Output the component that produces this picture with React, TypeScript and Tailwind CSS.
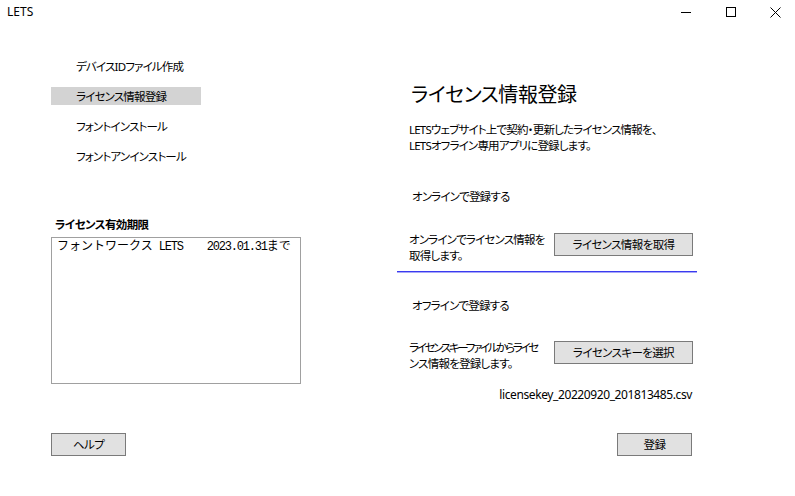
import React from "react";

const navItems = ["デバイスIDファイル作成", "ライセンス情報登録", "フォントインストール", "フォントアンインストール"];

function Btn({ label, className = "" }: { label: string; className?: string }) {
  return (
    <div
      className={`flex items-center justify-center bg-[#e1e1e1] border border-[#7a7a7a] text-[11.5px] tracking-[-0.6px] leading-[16px] text-black ${className}`}
    >
      {label}
    </div>
  );
}

export default function App() {
  return (
    <div className="w-[795px] h-[496px] bg-white text-black overflow-hidden font-['Noto_Sans','Noto_Sans_CJK_JP',sans-serif] [font-feature-settings:'palt'] text-[11.5px] tracking-[-0.8px]">
      {/* title bar */}
      <div className="h-[30px] flex items-start justify-between">
        <div className="pl-[7px] pt-[4px] text-[12px] tracking-normal leading-[16px]">LETS</div>
        <div className="flex mr-[-3px]">
          <div className="w-[45px] h-[24px] flex items-center justify-center">
            <div className="w-[10px] h-[1px] bg-black" />
          </div>
          <div className="w-[45px] h-[24px] flex items-center justify-center">
            <div className="w-[10px] h-[10px] border border-black" />
          </div>
          <div className="w-[45px] h-[24px] flex items-center justify-center">
            <svg width="11" height="11" viewBox="0 0 11 11">
              <path d="M0.5 0.5 L10.5 10.5 M10.5 0.5 L0.5 10.5" stroke="#000" strokeWidth="1" />
            </svg>
          </div>
        </div>
      </div>

      {/* body */}
      <div className="flex">
        {/* left column */}
        <div className="ml-[51px] w-[250px] flex flex-col">
          <div className="mt-[27px] flex flex-col gap-[12px]">
            {navItems.map((t, i) => (
              <div
                key={t}
                className={`w-[150px] h-[18px] pl-[25px] leading-[20px] ${i === 1 ? "bg-[#d3d3d3]" : ""}`}
              >
                {t}
              </div>
            ))}
          </div>
          <div className="mt-[51px] pl-[4px] h-[16px] leading-[18px] font-bold tracking-[-0.6px]">ライセンス有効期限</div>
          <div className="mt-[5px] h-[147px] border border-[#a0a0a0] px-[5px] pt-[1px]">
            <div className="whitespace-pre leading-[15px] tracking-normal font-['Liberation_Mono','Noto_Sans_CJK_JP',monospace] [font-feature-settings:normal]">
              <span className="text-[12px]">フォントワークス</span>
              <span className="text-[12px] tracking-[-1.2px]">{" LETS    2023.01.31"}</span>
              <span className="text-[12px]">まで</span>
            </div>
          </div>
          <Btn label="ヘルプ" className="mt-[49px] w-[75px] h-[23px]" />
        </div>

        {/* right column */}
        <div className="ml-[96px] w-[300px] flex flex-col">
          <div className="mt-[50px] pl-[14px] text-[20px] tracking-[-0.4px] leading-[30px]">ライセンス情報登録</div>
          <div className="mt-[12px] pl-[12px] leading-[16px]">
            LETSウェブサイト上で契約・更新したライセンス情報を、
            <br />
            LETSオフライン専用アプリに登録します。
          </div>
          <div className="mt-[35px] pl-[15px] leading-[16px]">オンラインで登録する</div>
          <div className="mt-[27px] flex">
            <div className="w-[157px] pl-[12px] leading-[16px] whitespace-nowrap">
              オンラインでライセンス情報を
              <br />
              取得します。
            </div>
            <Btn label="ライセンス情報を取得" className="mt-[1px] w-[139px] h-[23px]" />
          </div>
          <div className="mt-[7px] w-[300px] h-[2px] flex flex-col">
            <div className="h-[1px] bg-[#3a3af0]" />
            <div className="h-[1px] bg-[#a8a8f8]" />
          </div>
          <div className="mt-[25px] pl-[15px] leading-[16px]">オフラインで登録する</div>
          <div className="mt-[26px] flex">
            <div className="w-[157px] pl-[12px] leading-[16px] whitespace-nowrap">
              <span className="tracking-[-2.3px]">ライセンスキーファイルからライセ</span>
              <br />
              ンス情報を登録します。
            </div>
            <Btn label="ライセンスキーを選択" className="mt-[1px] w-[139px] h-[23px]" />
          </div>
          <div className="mt-[15px] pr-[5px] text-right text-[12px] tracking-[-0.4px] leading-[16px]">licensekey_20220920_201813485.csv</div>
          <div className="mt-[30px] flex justify-end pr-[5px]">
            <Btn label="登録" className="w-[75px] h-[23px]" />
          </div>
        </div>
      </div>
    </div>
  );
}
